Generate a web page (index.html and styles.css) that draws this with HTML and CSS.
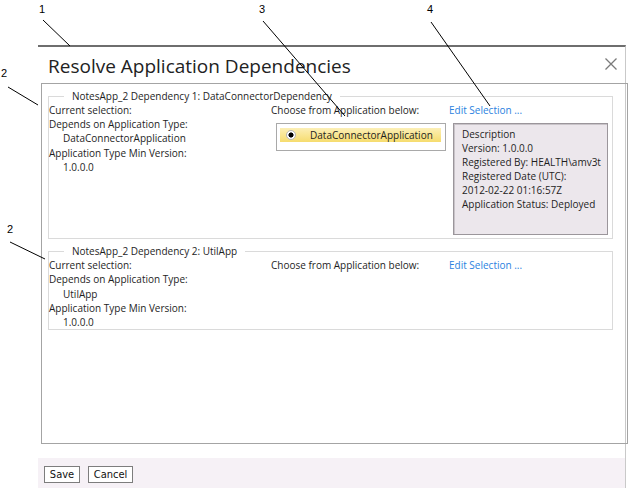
FILE: index.html
```html
<!DOCTYPE html>
<html>
<head>
<meta charset="utf-8">
<title>Resolve Application Dependencies</title>
<link rel="stylesheet" href="styles.css">
</head>
<body>
<div class="page">
  <div class="dialog">
    <div class="header">
      <h1 class="title">Resolve Application Dependencies</h1>
      <svg class="close" width="12" height="12" viewBox="0 0 12 12"><path d="M0.5 0.5 L11.5 11.5 M11.5 0.5 L0.5 11.5" stroke="#7a7a7a" stroke-width="1.3" fill="none"/></svg>
    </div>
    <div class="content">
      <fieldset class="group">
        <legend>NotesApp_2 Dependency 1: DataConnectorDependency</legend>
        <div class="group-body">
          <div class="info">
            <div>Current selection:</div>
            <div>Depends on Application Type:</div>
            <div class="indent">DataConnectorApplication</div>
            <div>Application Type Min Version:</div>
            <div class="indent">1.0.0.0</div>
          </div>
          <div class="choose">
            <div class="choose-head">
              <span class="choose-label">Choose from Application below:</span>
              <a class="edit">Edit Selection ...</a>
            </div>
            <div class="choose-body">
              <div class="listbox">
                <div class="option selected"><span class="radio"></span><span>DataConnectorApplication</span></div>
              </div>
              <div class="desc">
                <div>Description</div>
                <div>Version: 1.0.0.0</div>
                <div>Registered By: HEALTH\amv3t</div>
                <div>Registered Date (UTC):</div>
                <div>2012-02-22 01:16:57Z</div>
                <div>Application Status: Deployed</div>
              </div>
            </div>
          </div>
        </div>
      </fieldset>
      <fieldset class="group group-second">
        <legend>NotesApp_2 Dependency 2: UtilApp</legend>
        <div class="group-body">
          <div class="info">
            <div>Current selection:</div>
            <div>Depends on Application Type:</div>
            <div class="indent">UtilApp</div>
            <div>Application Type Min Version:</div>
            <div class="indent">1.0.0.0</div>
          </div>
          <div class="choose">
            <div class="choose-head">
              <span class="choose-label">Choose from Application below:</span>
              <a class="edit">Edit Selection ...</a>
            </div>
          </div>
        </div>
      </fieldset>
    </div>
    <div class="footer">
      <button class="btn btn-save">Save</button>
      <button class="btn btn-cancel">Cancel</button>
    </div>
  </div>

  <span class="num num-1">1</span>
  <span class="num num-3">3</span>
  <span class="num num-4">4</span>
  <span class="num num-2a">2</span>
  <span class="num num-2b">2</span>
  <svg class="callouts" width="629" height="488" viewBox="0 0 629 488">
    <g stroke="#000" stroke-width="1" fill="none">
      <line x1="43" y1="20" x2="70" y2="46"/>
      <line x1="263" y1="21" x2="345" y2="116"/>
      <line x1="431" y1="22" x2="490" y2="106"/>
      <line x1="8" y1="87" x2="38" y2="105"/>
      <line x1="10" y1="242" x2="45" y2="259"/>
    </g>
  </svg>
</div>
</body>
</html>
```

FILE: styles.css
```css
html, body {
  margin: 0;
  padding: 0;
  background: #fff;
}
body {
  width: 629px;
  height: 488px;
  overflow: hidden;
  font-family: "Open Sans", "Noto Sans", sans-serif;
  color: #1e1e1e;
}
.page {
  position: relative;
  width: 629px;
  height: 488px;
  overflow: hidden;
}
.dialog {
  margin-left: 38px;
  margin-top: 45px;
  width: 587px;
  height: 450px;
  border-top: 2px solid #6e6e6e;
  border-right: 1px solid #c9c9c9;
  display: flex;
  flex-direction: column;
}
.header {
  height: 36px;
  display: flex;
  align-items: flex-start;
  justify-content: space-between;
  padding: 0 8px 0 10px;
}
.title {
  margin: 6px 0 0 0;
  font-size: 19px;
  font-weight: 400;
  line-height: 26px;
  color: #222;
}
.close {
  margin-top: 11px;
}
.content {
  margin-left: 3px;
  width: 579px;
  height: 354px;
  border: 1px solid #a4a4a4;
  padding: 5px 0 0 6px;
  font-size: 10px;
}
.group {
  margin: 0;
  padding: 0;
  width: 563px;
  border: 1px solid #dadada;
}
.group-second {
  margin-top: 5px;
}
.group legend {
  margin-left: 15px;
  padding: 0 8px;
  font-size: 10px;
  line-height: 14px;
}
.group-body {
  display: flex;
  line-height: 14.2px;
}
.info {
  width: 222px;
  flex: none;
}
.indent {
  padding-left: 14px;
}
.choose {
  flex: 1;
}
.choose-head {
  display: flex;
}
.choose-label {
  width: 178px;
  flex: none;
}
.edit {
  color: #2b82e0;
  cursor: pointer;
}
.choose-body {
  display: flex;
  margin-top: 6px;
  margin-bottom: 3px;
  align-items: flex-start;
}
.listbox {
  margin-left: 5px;
  width: 168px;
  height: 22px;
  border: 1px solid #a9a9a9;
  padding-top: 4px;
}
.option {
  display: flex;
  align-items: center;
  margin: 0 4px 0 3px;
  height: 14px;
}
.option.selected {
  background: linear-gradient(#fcefb6, #f6dc6e);
}
.radio {
  width: 8px;
  height: 8px;
  border-radius: 50%;
  border: 1px solid #b5b5b5;
  background: radial-gradient(circle, #000 0, #000 2.3px, #fff 2.8px);
  margin: 0 14px 0 6px;
  flex: none;
}
.desc {
  margin-left: 7px;
  width: 145px;
  height: 103px;
  border: 1px solid #9b969b;
  box-shadow: inset 1px 1px 0 #c9c4c9;
  background: #ece7ec;
  padding: 3px 0 4px 8px;
  line-height: 14px;
  overflow: hidden;
  white-space: nowrap;
}
.footer {
  margin-top: 14px;
  flex: 1;
  background: #f6f1f6;
  padding: 8px 0 0 6px;
  display: flex;
  align-items: flex-start;
  gap: 8px;
}
.btn {
  height: 17px;
  border: 1px solid #7d7d7d;
  background: #fff;
  font-family: "Liberation Sans Narrow", "DejaVu Sans Condensed", "Liberation Sans", sans-serif;
  font-size: 11px;
  padding: 0;
  color: #111;
  border-radius: 0;
}
.btn-save { width: 36px; }
.btn-cancel { width: 45px; }
.num {
  position: absolute;
  font-family: "Liberation Sans", Arial, sans-serif;
  font-size: 11px;
  line-height: 12px;
  color: #000;
}
.num-1 { left: 39px; top: 3px; }
.num-3 { left: 259px; top: 3px; }
.num-4 { left: 427px; top: 3px; }
.num-2a { left: 1px; top: 67px; }
.num-2b { left: 7px; top: 223px; }
.callouts {
  position: absolute;
  left: 0;
  top: 0;
  pointer-events: none;
}
```
